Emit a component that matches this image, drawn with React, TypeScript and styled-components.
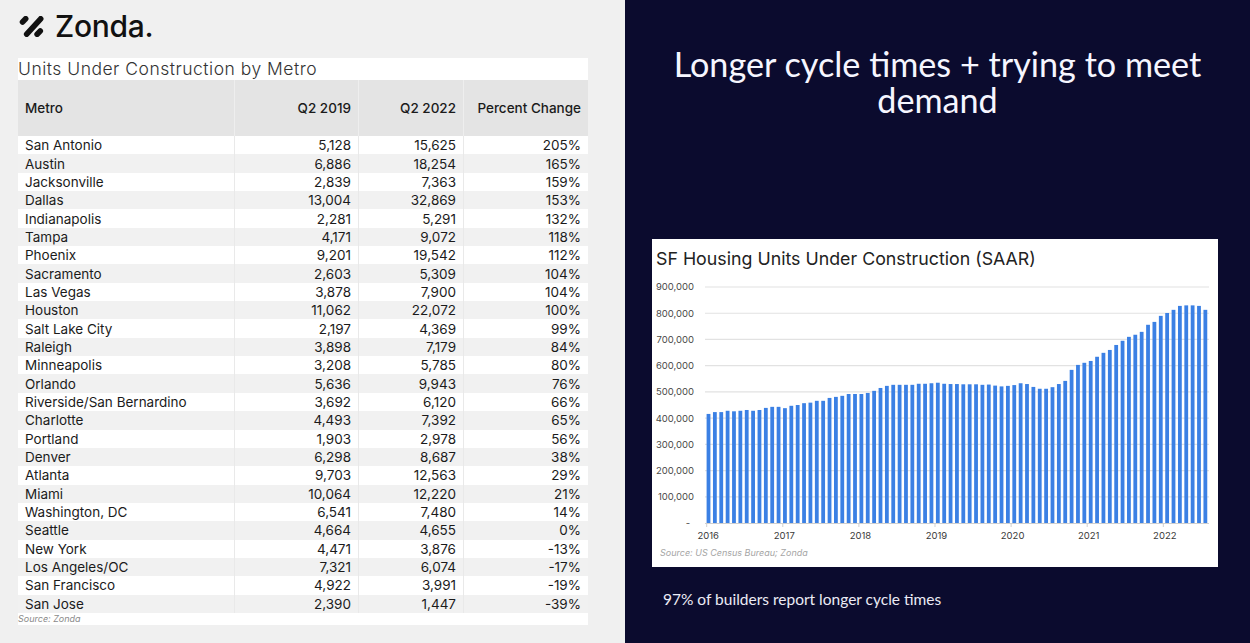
import React from "react";
import styled, { createGlobalStyle } from "styled-components";

const GlobalStyle = createGlobalStyle`
  html, body {
    margin: 0;
    padding: 0;
  }
  body {
    width: 1250px;
    height: 643px;
    overflow: hidden;
    font-family: Inter, "Noto Sans", sans-serif;
  }
`;

const rows: [string, string, string, string][] = [
  ["San Antonio", "5,128", "15,625", "205%"],
  ["Austin", "6,886", "18,254", "165%"],
  ["Jacksonville", "2,839", "7,363", "159%"],
  ["Dallas", "13,004", "32,869", "153%"],
  ["Indianapolis", "2,281", "5,291", "132%"],
  ["Tampa", "4,171", "9,072", "118%"],
  ["Phoenix", "9,201", "19,542", "112%"],
  ["Sacramento", "2,603", "5,309", "104%"],
  ["Las Vegas", "3,878", "7,900", "104%"],
  ["Houston", "11,062", "22,072", "100%"],
  ["Salt Lake City", "2,197", "4,369", "99%"],
  ["Raleigh", "3,898", "7,179", "84%"],
  ["Minneapolis", "3,208", "5,785", "80%"],
  ["Orlando", "5,636", "9,943", "76%"],
  ["Riverside/San Bernardino", "3,692", "6,120", "66%"],
  ["Charlotte", "4,493", "7,392", "65%"],
  ["Portland", "1,903", "2,978", "56%"],
  ["Denver", "6,298", "8,687", "38%"],
  ["Atlanta", "9,703", "12,563", "29%"],
  ["Miami", "10,064", "12,220", "21%"],
  ["Washington, DC", "6,541", "7,480", "14%"],
  ["Seattle", "4,664", "4,655", "0%"],
  ["New York", "4,471", "3,876", "-13%"],
  ["Los Angeles/OC", "7,321", "6,074", "-17%"],
  ["San Francisco", "4,922", "3,991", "-19%"],
  ["San Jose", "2,390", "1,447", "-39%"],
];

// monthly SAAR, thousands, Jan 2016 ->
const units = [
  416, 423, 423, 428, 426, 428, 431, 428, 431, 439, 443, 443,
  438, 447, 450, 457, 459, 466, 466, 477, 481, 485, 492, 492,
  492, 496, 504, 515, 523, 527, 527, 527, 527, 531, 531, 533,
  535, 531, 530, 530, 529, 529, 529, 527, 528, 524, 521, 523,
  526, 533, 530, 519, 512, 512, 518, 530, 542, 584, 603, 611,
  618, 634, 649, 660, 679, 695, 710, 718, 729, 756, 767, 790,
  801, 813, 828, 830, 830, 828, 813,
];

const years = ["2016", "2017", "2018", "2019", "2020", "2021", "2022"];

const Page = styled.div`
  display: flex;
  width: 1250px;
  height: 643px;
`;

const LeftPanel = styled.section`
  width: 625px;
  flex-shrink: 0;
  background: #f0f0f0;
  padding-left: 18px;
  box-sizing: border-box;
  display: flex;
  flex-direction: column;
`;

const LogoRow = styled.div`
  display: flex;
  align-items: center;
  gap: 11px;
  height: 30px;
  margin-top: 11px;
  margin-left: 1px;
`;

const LogoText = styled.span`
  font-size: 30px;
  line-height: 30px;
  font-weight: 500;
  letter-spacing: -0.3px;
  color: #111;
`;

const Card = styled.div`
  margin-top: 17px;
  width: 570px;
  background: #fff;
`;

const CardTitle = styled.div`
  height: 22px;
  font-size: 17.5px;
  line-height: 22px;
  font-weight: 300;
  letter-spacing: 0.5px;
  color: #333;
`;

const Row = styled.div<{ $head?: boolean; $alt?: boolean }>`
  display: grid;
  grid-template-columns: 216px 124px 105px 125px;
  height: ${(p) => (p.$head ? "56px" : "18.35px")};
  background: ${(p) => (p.$head ? "#e4e4e4" : p.$alt ? "#f1f1f1" : "#fff")};
  font-size: 13.5px;
  font-weight: ${(p) => (p.$head ? 500 : 400)};
  color: #1b1b1b;
`;

const Cell = styled.div<{ $num?: boolean; $head?: boolean }>`
  display: flex;
  align-items: center;
  justify-content: ${(p) => (p.$num ? "flex-end" : "flex-start")};
  padding: ${(p) => (p.$num ? "0 7px 0 0" : "0 0 0 7px")};
  border-left: ${(p) =>
    p.$num ? `1px solid ${p.$head ? "#eeeeee" : "#e9e9e9"}` : "none"};
  white-space: nowrap;
`;

const Source = styled.div`
  height: 12px;
  font-size: 9px;
  line-height: 12px;
  font-style: italic;
  color: #8a8a8a;
`;

const RightPanel = styled.section`
  flex: 1;
  background: #0b0b2e;
  display: flex;
  flex-direction: column;
  padding-top: 46px;
  box-sizing: border-box;
`;

const Headline = styled.h1`
  margin: 0;
  font-family: Lato, "Open Sans", sans-serif;
  font-weight: 400;
  font-size: 34.2px;
  line-height: 36px;
  color: #f6f6ff;
  text-align: center;
  padding: 0 20px;
`;

const ChartCard = styled.div`
  margin: 121px 0 0 27px;
  width: 566px;
  height: 328px;
  background: #fff;
  display: flex;
  flex-direction: column;
`;

const ChartTitle = styled.div`
  height: 39px;
  padding-left: 4px;
  font-size: 17.8px;
  line-height: 39px;
  color: #222;
`;

const ChartSource = styled.div`
  height: 14px;
  padding-left: 8px;
  font-size: 9px;
  line-height: 14px;
  font-style: italic;
  color: #a5a5a5;
`;

const Caption = styled.p`
  margin: 22px 0 0 38px;
  font-family: Lato, "Open Sans", sans-serif;
  font-size: 15.5px;
  line-height: 20px;
  color: #ecebf5;
`;

function ZondaMark() {
  return (
    <svg width="25" height="21" viewBox="0 0 24 20">
      <g stroke="#111" strokeWidth="5.4" strokeLinecap="round">
        <line x1="3.4" y1="5.6" x2="6.4" y2="2.6" />
        <line x1="7.4" y1="17.4" x2="20.8" y2="2.6" />
        <line x1="17.4" y1="17.4" x2="20.4" y2="14.4" />
      </g>
    </svg>
  );
}

function UnitsChart() {
  const x0 = 53;
  const x1 = 557;
  const yZero = 245;
  const step = 26.22;
  const yOf = (v: number) => yZero - (v / 100) * step;
  const ticks = [900, 800, 700, 600, 500, 400, 300, 200, 100];
  return (
    <svg width="566" height="268" viewBox="0 0 566 268">
      {ticks.map((t) => (
        <g key={t}>
          <line x1={x0} x2={x1} y1={yOf(t)} y2={yOf(t)} stroke="#e2e2e2" strokeWidth="1.2" />
          <text x="42" y={yOf(t) + 3.4} textAnchor="end" fontSize="9.5" fill="#4a4a4a" fontFamily="Inter, sans-serif">
            {`${t},000`}
          </text>
        </g>
      ))}
      <text x="38" y={yZero + 3.4} textAnchor="end" fontSize="9.5" fill="#4a4a4a" fontFamily="Inter, sans-serif">
        -
      </text>
      {units.map((v, i) => {
        const cx = 56.5 + i * 6.37;
        return (
          <rect key={i} x={cx - 1.9} y={yOf(v)} width="3.8" height={yZero - yOf(v)} fill="#3b80e4" />
        );
      })}
      <line x1={x0} x2={x1} y1={yZero + 0.5} y2={yZero + 0.5} stroke="#cfcfcf" strokeWidth="1" />
      {years.map((y, k) => {
        const tx = 54.7 + k * 76.1;
        return (
          <g key={y}>
            <line x1={tx} x2={tx} y1={yZero} y2={yZero + 4} stroke="#cfcfcf" strokeWidth="1" />
            <text x={tx + 1.5} y="261" textAnchor="middle" fontSize="9.5" fill="#3a3a3a" fontFamily="Inter, sans-serif">
              {y}
            </text>
          </g>
        );
      })}
    </svg>
  );
}

export default function App() {
  return (
    <Page>
      <GlobalStyle />
      <LeftPanel>
        <LogoRow>
          <ZondaMark />
          <LogoText>Zonda.</LogoText>
        </LogoRow>
        <Card>
          <CardTitle>Units Under Construction by Metro</CardTitle>
          <Row $head>
            <Cell>Metro</Cell>
            <Cell $num $head>Q2 2019</Cell>
            <Cell $num $head>Q2 2022</Cell>
            <Cell $num $head>Percent Change</Cell>
          </Row>
          {rows.map((r, i) => (
            <Row key={r[0]} $alt={i % 2 === 1}>
              <Cell>{r[0]}</Cell>
              <Cell $num>{r[1]}</Cell>
              <Cell $num>{r[2]}</Cell>
              <Cell $num>{r[3]}</Cell>
            </Row>
          ))}
          <Source>Source: Zonda</Source>
        </Card>
      </LeftPanel>
      <RightPanel>
        <Headline>
          Longer cycle times + trying to meet
          <br />
          demand
        </Headline>
        <ChartCard>
          <ChartTitle>SF Housing Units Under Construction (SAAR)</ChartTitle>
          <UnitsChart />
          <ChartSource>Source: US Census Bureau; Zonda</ChartSource>
        </ChartCard>
        <Caption>97% of builders report longer cycle times</Caption>
      </RightPanel>
    </Page>
  );
}
